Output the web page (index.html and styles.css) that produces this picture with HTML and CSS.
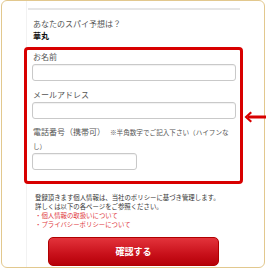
FILE: index.html
```html
<!DOCTYPE html>
<html lang="ja">
<head>
<meta charset="utf-8">
<link rel="stylesheet" href="styles.css">
</head>
<body>
<div class="card">
  <div class="col">
    <div class="rule"></div>
    <p class="q">あなたのスパイ予想は？</p>
    <p class="answer">華丸</p>
    <div class="form">
      <p class="label">お名前</p>
      <input class="field" type="text">
      <p class="label gap">メールアドレス</p>
      <input class="field" type="text">
      <p class="label gap tel">電話番号（携帯可）<span class="note">※半角数字でご記入下さい（ハイフンなし）</span></p>
      <input class="field short" type="text">
    </div>
    <div class="policy">
      <p>登録頂きます個人情報は、当社のポリシーに基づき管理します。</p>
      <p>詳しくは以下の各ページをご参照ください。</p>
      <p class="link">・個人情報の取扱いについて</p>
      <p class="link">・プライバシーポリシーについて</p>
    </div>
    <button class="btn" type="button">確認する</button>
  </div>
  <svg class="arrow" width="22" height="12" viewBox="0 0 22 12">
    <rect x="4" y="4.5" width="18" height="3" fill="#d80000"/>
    <path d="M6.5 0.5 L8 2 L3.5 6 L8 10 L6.5 11.5 L0.5 6 Z" fill="#d80000"/>
  </svg>
</div>
</body>
</html>
```
FILE: styles.css
```css
* { box-sizing: border-box; }
body {
  margin: 0;
  background: #fff;
  font-family: "Noto Sans CJK JP", "Noto Sans", sans-serif;
  color: #444;
}
p { margin: 0; }
.card {
  position: relative;
  width: 264px;
  height: 268px;
  margin-left: 1px;
  border: 1px solid #e2c88e;
  border-radius: 6px;
}
.col {
  margin-left: 24px;
  width: 214px;
  height: 100%;
  padding-top: 7px;
  border-left: 1px solid #f2f2f2;
}
.rule {
  height: 2px;
  background: #e6e6e6;
  margin-left: 1px;
}
.q {
  margin-top: 8px;
  padding-left: 6px;
  font-size: 8px;
  line-height: 12px;
  color: #555;
}
.answer {
  padding-left: 6px;
  font-size: 8px;
  line-height: 12px;
  font-weight: bold;
  color: #111;
}
.form {
  margin: 5px -3px 0 -3px;
  border: 3px solid #d80000;
  border-radius: 4px;
  padding: 1px 7px 11px 5px;
}
.label {
  padding-left: 1px;
  font-size: 8px;
  line-height: 12px;
  color: #555;
}
.label.gap { margin-top: 8px; }
.label.tel { line-height: 14px; margin-top: 6px; }
.note { font-size: 6.6px; margin-left: 5px; line-height: 14px; }
.field {
  display: block;
  width: 204px;
  height: 17px;
  margin: 1px 0 0 0;
  border: 1px solid #c9c9c9;
  border-radius: 3px;
  background: #fff;
  box-shadow: inset 0 1px 1px rgba(0,0,0,0.06);
  padding: 0;
}
.field.short { width: 105px; margin-top: 0; }
.policy {
  margin-top: 9px;
  padding-left: 8px;
  font-size: 6.4px;
  line-height: 9px;
  color: #333;
}
.link { color: #e0383e; }
.btn {
  display: flex;
  align-items: center;
  justify-content: center;
  margin: 8px 0 0 21px;
  width: 171px;
  height: 29px;
  border: 1px solid #b00000;
  border-radius: 5px;
  background: linear-gradient(#e3333b, #c8101a 60%, #b60008);
  color: #fff;
  font-family: "Noto Sans CJK JP", sans-serif;
  font-size: 9px;
  font-weight: bold;
  padding: 0;
}
.arrow {
  position: absolute;
  left: 242px;
  top: 110px;
}
```
